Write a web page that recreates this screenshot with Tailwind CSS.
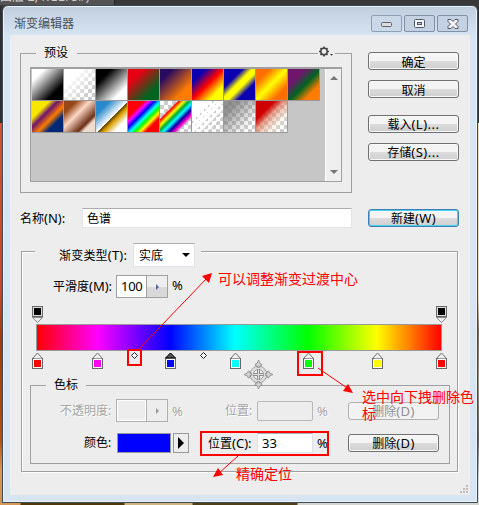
<!DOCTYPE html>
<html lang="zh-CN">
<head>
<meta charset="utf-8">
<title>渐变编辑器</title>
<script src="https://cdn.jsdelivr.net/npm/@tailwindcss/browser@4"></script>
</head>
<body class="relative h-[505px] w-[479px] overflow-hidden bg-[#383838] font-['Noto_Sans','Noto_Sans_CJK_SC',sans-serif] text-[12px] leading-[16px] text-black">
<!-- document behind the dialog -->
<div class="absolute inset-0 bg-[linear-gradient(#303030_0_123px,#d95030_123px,#c9442a_290px,#9c3c08_340px,#b05016_440px,#d89858_470px,#d09050_505px)]"></div>
<div class="absolute top-0 right-0 h-full w-[4px] bg-[linear-gradient(#303030_0_123px,#ead9ae_123px_300px,#806c5c_330px,#a09080_380px,#6b6258_440px,#d8d8d8_480px)]"></div>
<div class="absolute bottom-0 left-0 h-[2px] w-full bg-[linear-gradient(90deg,#d89858_20px,#503808_21px_124px,#cfb680_125px_192px,#504018_193px_297px,#d4d4d0_298px)]"></div>
<div class="absolute top-0 left-0 h-[7px] w-full bg-[#383838]"></div>
<div class="absolute top-0 left-0 h-[5px] w-[115px] overflow-hidden border-r border-[#222] bg-[#535353] text-[12px] text-[#d0d0d0]"><div class="-mt-[11px] tracking-[.2px] whitespace-nowrap">图层 2, RGB/8#)</div></div>

<div class="relative mt-[5px] ml-[2px] flex h-[498px] w-[476px] flex-col rounded-t-[6px] border border-[#3e4a56] bg-[#d7e4f2] bg-[linear-gradient(#bfcddd,#d7e4f2_29px)] px-[7px] pb-[7px] shadow-[inset_0_0_0_1px_#e9f1fa]">
  <header class="flex h-[29px] shrink-0 items-start justify-between pt-[9px] pl-[4px]">
    <h1 class="pt-px text-[12px] text-[#49525c]">渐变编辑器</h1>
    <div class="flex gap-[2px] pr-[2px]">
      <div class="flex h-[17px] w-[31px] items-center justify-center rounded-[2px] border border-[#8fa0b4] bg-[#cbd8e7]"><svg width="13" height="9"><rect x="1.5" y="3.5" width="10" height="4" rx="1" fill="#ddd" stroke="#606468"/></svg></div>
      <div class="flex h-[17px] w-[31px] items-center justify-center rounded-[2px] border border-[#7f90a8] bg-[#c3d1e2]"><svg width="11" height="9"><rect x=".5" y=".5" width="10" height="8" rx="1" fill="#f4f4f4" stroke="#505868"/><rect x="3.5" y="3.5" width="4" height="2" fill="#b8c8dc" stroke="#505868"/></svg></div>
      <div class="flex h-[17px] w-[31px] items-center justify-center rounded-[2px] border border-[#7f90a8] bg-[#c3d1e2]"><svg width="12" height="10"><path d="M1 .5h3l2 2 2-2h3v2L8.500 5 11 7.500v2H8l-2-2-2 2H1v-2L3.500 5 1 2.500z" fill="#f4f4f4" stroke="#505868"/></svg></div>
    </div>
  </header>

  <main class="h-[460px] w-[460px] bg-[#ededed] pl-[10px]">
    <div class="flex gap-[16px] pt-[17px]">
      <!-- presets -->
      <section class="mt-px h-[140px] w-[332px] border border-[#a0a0a0]">
        <div class="-mt-[9px] flex h-[22px] items-start justify-between pl-[15px] pr-[16px]">
          <h2 class="w-[41px] bg-[#ededed] pl-[8px]">预设</h2>
          <div class="bg-[#ededed]"><svg width="17" height="13"><circle cx="6" cy="6.500" r="3.200" fill="none" stroke="#444" stroke-width="1.500"/><path d="M6 1.500v2M6 9.500v2M1 6.500h2M9 6.500h2M2.500 3l1.200 1.200M8.300 8.800l1.200 1.200M2.500 10l1.200-1.200M8.300 4.200L9.500 3" stroke="#444" stroke-width="1.700"/><path d="M12 9h3l-1.500 1.700z" fill="#333"/></svg></div>
        </div>
        <div class="ml-[9px] flex h-[115px] w-[312px] justify-between border border-t-2 border-[#a0a0a0] bg-[#c6c6c6]">
          <div class="ml-px flex flex-col">
            <div class="flex h-[32px]">
              <i class="h-[32px] w-[32px] border-r border-b border-[#999] bg-[linear-gradient(135deg,#fff_20%,#000_75%)]"></i>
              <div class="h-[32px] w-[32px] border-r border-b border-[#999] bg-[repeating-conic-gradient(#ccc_0_25%,#fff_0_50%)] bg-[size:8px_8px]"><i class="block h-full bg-[linear-gradient(135deg,#fff_25%,#fff0_80%)]"></i></div>
              <i class="h-[32px] w-[32px] border-r border-b border-[#999] bg-[linear-gradient(135deg,#000_25%,#fff_78%)]"></i>
              <i class="h-[32px] w-[32px] border-r border-b border-[#999] bg-[linear-gradient(135deg,#e60012_25%,#006420_75%)]"></i>
              <i class="h-[32px] w-[32px] border-r border-b border-[#999] bg-[linear-gradient(135deg,#280a60_20%,#ff7c00_75%)]"></i>
              <i class="h-[32px] w-[32px] border-r border-b border-[#999] bg-[linear-gradient(135deg,#0a00b2_22%,#f00_50%,#ff0_78%)]"></i>
              <i class="h-[32px] w-[32px] border-r border-b border-[#999] bg-[linear-gradient(135deg,#0a00b2_30%,#ff0_46%_56%,#0a00b2_72%)]"></i>
              <i class="h-[32px] w-[32px] border-r border-b border-[#999] bg-[linear-gradient(135deg,#ff6e00_22%,#ff0_50%,#ff6e00_78%)]"></i>
              <i class="h-[32px] w-[32px] border-r border-b border-[#999] bg-[linear-gradient(135deg,#6f156c_28%,#006420_53%,#ff7c00_77%)]"></i>
            </div>
            <div class="flex h-[32px]">
              <i class="h-[32px] w-[32px] border-r border-b border-[#999] bg-[linear-gradient(135deg,#f9e600_28%,#6f156c_42%,#fd7c00_59%,#002874_74%)]"></i>
              <i class="h-[32px] w-[32px] border-r border-b border-[#999] bg-[linear-gradient(135deg,#974618_20%,#fbd8c5_42%,#6c2e16_72%,#efdbcd_80%)]"></i>
              <i class="h-[32px] w-[32px] border-r border-b border-[#999] bg-[linear-gradient(135deg,#2989cc_22%,#fff_52%,#604000_53%,#d99f00_61%,#fff_79%)]"></i>
              <i class="h-[32px] w-[32px] border-r border-b border-[#999] bg-[linear-gradient(135deg,#f00_25%,#f0f_34%,#00f_43%,#0ff_53%,#0f0_61%,#ff0_69%,#f00_78%)]"></i>
              <div class="h-[32px] w-[32px] border-r border-b border-[#999] bg-[repeating-conic-gradient(#ccc_0_25%,#fff_0_50%)] bg-[size:8px_8px]"><i class="block h-full bg-[linear-gradient(135deg,#f000_27%,#f00_31%,#ff0_39%,#0a3_47%,#0ff_55%,#00a_64%,#f0c_73%,#f0c0_79%)]"></i></div>
              <div class="h-[32px] w-[32px] border-r border-b border-[#999] bg-[repeating-conic-gradient(#ccc_0_25%,#fff_0_50%)] bg-[size:8px_8px]"><i class="block h-full bg-[linear-gradient(135deg,#fff_32%,#fff0_34%_36%,#fff_37%_42%,#fff0_44%_46%,#fff_47%_52%,#fff0_54%_58%,#fff_59%_63%,#fff0_65%_69%,#fff_70%_73%,#fff0_75%)]"></i></div>
              <div class="h-[32px] w-[32px] border-r border-b border-[#999] bg-[repeating-conic-gradient(#ccc_0_25%,#fff_0_50%)] bg-[size:8px_8px]"><i class="block h-full bg-[linear-gradient(135deg,#777c_20%,#7770_80%)]"></i></div>
              <div class="h-[32px] w-[32px] border-r border-b border-[#999] bg-[repeating-conic-gradient(#ccc_0_25%,#fff_0_50%)] bg-[size:8px_8px]"><i class="block h-full bg-[linear-gradient(135deg,#ce0000_30%,#e0765599_48%,#f9e6cf66_70%,#fff0_85%)]"></i></div>
            </div>
          </div>
          <div class="flex w-[16px] flex-col items-center justify-between border-l border-white bg-[#efefef] py-[6px]">
            <svg width="8" height="5"><path d="M0 5L4 1l4 4z" fill="#777"/></svg>
            <svg width="8" height="5"><path d="M0 0L4 4l4-4z" fill="#777"/></svg>
          </div>
        </div>
      </section>
      <!-- dialog actions -->
      <div class="flex flex-col">
        <button class="h-[18px] w-[91px] rounded-[3px] border border-[#707070] bg-[linear-gradient(#f4f4f4_50%,#dcdcdc_50%,#cfcfcf)] pt-px leading-[18px] shadow-[inset_0_0_0_1px_#f8f8f8]">确定</button>
        <button class="mt-[10px] h-[18px] w-[91px] rounded-[3px] border border-[#707070] bg-[linear-gradient(#f4f4f4_50%,#dcdcdc_50%,#cfcfcf)] pt-px leading-[18px] shadow-[inset_0_0_0_1px_#f8f8f8]">取消</button>
        <button class="mt-[17px] h-[18px] w-[91px] rounded-[3px] border border-[#707070] bg-[linear-gradient(#f4f4f4_50%,#dcdcdc_50%,#cfcfcf)] leading-[17px] shadow-[inset_0_0_0_1px_#f8f8f8]">载入<span class="text-[13px] tracking-[.5px]">(L)...</span></button>
        <button class="mt-[10px] h-[18px] w-[91px] rounded-[3px] border border-[#707070] bg-[linear-gradient(#f4f4f4_50%,#dcdcdc_50%,#cfcfcf)] leading-[17px] shadow-[inset_0_0_0_1px_#f8f8f8]">存储<span class="text-[13px] tracking-[.5px]">(S)...</span></button>
      </div>
    </div>

    <!-- name -->
    <div class="mt-[15px] flex h-[20px] items-start">
      <label class="w-[62px] pt-px leading-[18px]">名称<span class="text-[13px]">(N):</span></label>
      <div class="h-[20px] w-[270px] rounded-[1px] border border-[#e2e3ea] border-t-[#abadb3] bg-white pl-[4px] leading-[20px]">色谱</div>
      <button class="mt-px ml-[16px] h-[18px] w-[91px] rounded-[3px] border border-[#3c7fb1] bg-[linear-gradient(#f4f4f4_50%,#dcdcdc_50%,#cfcfcf)] leading-[17px] shadow-[inset_0_0_0_1px_#48d0f4]">新建<span class="text-[13px] tracking-[.4px]">(W)</span></button>
    </div>

    <!-- gradient settings -->
    <section class="mt-[23px] ml-px h-[221px] w-[437px] border border-[#a0a0a0] shadow-[1px_1px_0_#fff,inset_1px_1px_0_#fff]">
      <div class="-mt-[9px] ml-[13px] flex h-[24px] w-[166px] bg-[#ededed]">
        <label class="w-[98px] pt-[3px] pl-[24px] leading-[18px] tracking-[.2px] whitespace-nowrap">渐变类型<span class="text-[13px]">(T):</span></label>
        <div class="flex h-[24px] w-[62px] items-center justify-between border border-[#dfe2ea] border-t-[#abadb3] bg-white pr-[4px] pl-[5px]"><span class="pt-px">实底</span><svg width="8" height="4"><path d="M0 0h8L4 4z"/></svg></div>
      </div>
      <div class="mt-[8px] ml-[31px] flex h-[23px]">
        <label class="w-[63px] pt-px leading-[20px] whitespace-nowrap">平滑度<span class="text-[13px]">(M):</span></label>
        <div class="flex h-[23px] w-[52px] border border-[#a0a0a0]">
          <div class="w-[29px] bg-white pl-[4px] text-[13px] leading-[21px] tracking-[-.3px]">100</div>
          <div class="flex grow items-center justify-center border-l border-[#a0a0a0] bg-[linear-gradient(#eee_50%,#d8d8d8_50%)]"><svg width="3" height="6"><path d="M0 0l3 3-3 3z" fill="#5068a0"/></svg></div>
        </div>
        <span class="ml-[4px] text-[13px] leading-[21px]">%</span>
      </div>

      <!-- gradient bar with opacity and colour stops -->
      <svg class="mt-[7px] ml-[8px] block" width="417" height="66" shape-rendering="crispEdges">
        <defs>
          <linearGradient id="spectrum"><stop offset="0" stop-color="#f00"/><stop offset=".15" stop-color="#f0f"/><stop offset=".24" stop-color="#8000ff"/><stop offset=".33" stop-color="#00f"/><stop offset=".49" stop-color="#0ff"/><stop offset=".67" stop-color="#0f0"/><stop offset=".84" stop-color="#ff0"/><stop offset="1" stop-color="#f00"/></linearGradient>
          <g id="stop"><path d="M-5 6.500L0 1l5 5.500z" fill="#eee" stroke="#707070" shape-rendering="auto"/><rect x="-5" y="6.500" width="10" height="10" fill="#fff" stroke="#686868"/><path d="M-4 6.500h8" stroke="#999"/></g>
          <g id="alpha"><path d="M-5 11.500L0 16.500l5-5z" fill="#eee" stroke="#888" shape-rendering="auto"/><rect x="-5" y=".5" width="10" height="10" fill="#ddd" stroke="#686868" stroke-width="1"/><rect x="-3.500" y="2" width="7" height="7"/></g>
        </defs>
        <rect x="6.500" y="19.500" width="405" height="26" fill="url(#spectrum)" stroke="#999"/>
        <use href="#alpha" x="7.500" y="1"/><use href="#alpha" x="411.500" y="1"/>
        <g transform="translate(0 47)">
          <use href="#stop" x="7.500"/><rect x="4" y="8" width="7" height="7" fill="#f00"/>
          <use href="#stop" x="67.500"/><rect x="64" y="8" width="7" height="7" fill="#f0f"/>
          <use href="#stop" x="140.500"/><rect x="137" y="8" width="7" height="7" fill="#00f"/><path d="M135.500 6L140.500 1l5 5z" fill="#555" stroke="#000" shape-rendering="auto"/>
          <use href="#stop" x="205.500"/><rect x="202" y="8" width="7" height="7" fill="#0ff"/>
          <use href="#stop" x="278.500"/><rect x="275" y="8" width="7" height="7" fill="#0f0"/>
          <use href="#stop" x="347.500"/><rect x="344" y="8" width="7" height="7" fill="#ff0"/>
          <use href="#stop" x="411.500"/><rect x="408" y="8" width="7" height="7" fill="#f00"/>
          <path d="M104.500.5l3 3-3 3-3-3zM173.500.5l3 3-3 3-3-3z" fill="#fff" stroke="#222" shape-rendering="auto"/>
        </g>
      </svg>

      <!-- selected stop -->
      <div class="mt-[14px] ml-[8px] h-[79px] w-[420px] border border-[#a0a0a0]">
        <h2 class="-mt-[9px] ml-[15px] h-[16px] w-[40px] bg-[#ededed] pl-[8px]">色标</h2>
        <div class="mt-[6px] ml-[29px] flex h-[23px] items-center text-[#a5a5a5] [text-shadow:1px_1px_0_#fff]">
          <label class="w-[56px] whitespace-nowrap">不透明度:</label>
          <div class="flex h-[23px] w-[52px] border border-[#b0b0b0]"><div class="w-[29px] border border-white"></div><div class="flex grow items-center justify-center border-l border-[#b0b0b0]"><svg width="3" height="6"><path d="M0 0l3 3-3 3z" fill="#999"/></svg></div></div>
          <span class="ml-[4px] w-[53px] text-[13px]">%</span>
          <label class="w-[32px]">位置:</label>
          <div class="h-[20px] w-[56px] rounded-[2px] border border-[#b8b8b8]"></div>
          <span class="ml-[4px] w-[31px] text-[13px]">%</span>
          <button class="h-[18px] w-[91px] rounded-[3px] border border-[#b0b0b0] bg-[#f2f2f2] leading-[17px] text-[#909090]">删除<span class="text-[13px] tracking-[.4px]">(D)</span></button>
        </div>
        <div class="mt-[11px] ml-[53px] flex h-[20px] items-center">
          <label class="w-[33px]">颜色:</label>
          <div class="h-[20px] w-[54px] border border-[#999] bg-[#00f]"></div>
          <div class="ml-[2px] flex h-[20px] w-[16px] items-center justify-center border border-[#999]"><svg width="6" height="12"><path d="M0 0l6 6-6 6z"/></svg></div>
          <label class="ml-[19px] w-[49px] whitespace-nowrap">位置<span class="text-[13px]">(C):</span></label>
          <div class="h-[20px] w-[56px] rounded-[1px] border border-[#dce3ec] border-t-[#abadb3] bg-white pl-[4px] text-[13px] leading-[18px]">33</div>
          <span class="ml-[4px] w-[31px] text-[13px]">%</span>
          <button class="h-[18px] w-[91px] rounded-[3px] border border-[#707070] bg-[linear-gradient(#f4f4f4_50%,#dcdcdc_50%,#cfcfcf)] leading-[17px] shadow-[inset_0_0_0_1px_#f8f8f8]">删除<span class="text-[13px] tracking-[.4px]">(D)</span></button>
        </div>
      </div>
    </section>
    <svg class="mt-[13px] ml-[440px] block" width="8" height="8" fill="#bcbcbc"><path d="M6 0h2v2H6zM3 3h2v2H3zM6 3h2v2H6zM0 6h2v2H0zM3 6h2v2H3zM6 6h2v2H6z"/></svg>
  </main>
</div>

<!-- annotation overlay -->
<svg class="absolute top-0 left-0" width="479" height="505" fill="none">
  <g stroke="#f00" stroke-width="2"><path d="M128 350h13v15h-13zM298 352h24v23h-24zM201 432h127v23H201z"/></g>
  <path d="M137 351L208 277M318 368l32 22M238 456l-20 18" stroke="#f00"/>
  <path d="M212 273l-10 3 7 7zM353 393l-5-9-5 7zM213 477l5-9 5 7z" fill="#f00"/>
  <!-- crosshair cursor -->
  <g transform="translate(258.500 374.500)">
    <g stroke="#909090"><circle r="8.300"/><circle r="5.200"/></g>
    <circle r="6.700" stroke="#dcdcdc" stroke-width="2"/>
    <path d="M-5-1h10M-5 1h10M-1-5v10M1-5v10" stroke="#909090"/>
    <path d="M-5 0H5M0-5V5" stroke="#ddd"/>
    <path id="tip" d="M0-14.500l1.500 3.500 2 .8-.5 1.500-2 .2V-7h-2v-1.500l-2-.2-.5-1.500 2-.8z" fill="#d4d4d4" stroke="#909090" stroke-width=".9"/>
    <use href="#tip" transform="rotate(90)"/><use href="#tip" transform="rotate(180)"/><use href="#tip" transform="rotate(270)"/>
  </g>
</svg>
<div class="absolute top-[270px] left-[218px] text-[14px] leading-[18px] whitespace-nowrap text-[#f00]">可以调整渐变过渡中心</div>
<div class="absolute top-[388px] left-[362px] w-[114px] text-[14px] leading-[17px] text-[#f00]">选中向下拽删除色标</div>
<div class="absolute top-[465px] left-[236px] text-[14px] leading-[18px] whitespace-nowrap text-[#f00]">精确定位</div>
</body>
</html>
